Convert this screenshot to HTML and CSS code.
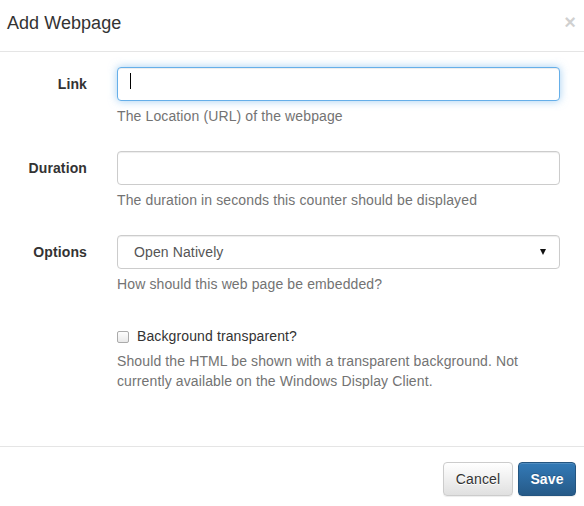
FILE: index.html
```html
<!DOCTYPE html>
<html>
<head>
<meta charset="utf-8">
<title>Add Webpage</title>
<link rel="stylesheet" href="styles.css">
</head>
<body>
<div class="modal">
  <div class="modal-header">
    <h4 class="modal-title">Add Webpage</h4>
    <button type="button" class="close">×</button>
  </div>
  <form class="modal-body">
    <div class="form-group">
      <label class="control-label" for="link">Link</label>
      <div class="field">
        <div class="input-wrap caret">
          <input id="link" class="form-control focused" type="text">
        </div>
        <span class="help-block">The Location (URL) of the webpage</span>
      </div>
    </div>
    <div class="form-group">
      <label class="control-label" for="duration">Duration</label>
      <div class="field">
        <input id="duration" class="form-control" type="text">
        <span class="help-block">The duration in seconds this counter should be displayed</span>
      </div>
    </div>
    <div class="form-group">
      <label class="control-label" for="options">Options</label>
      <div class="field">
        <div class="select-wrap">
          <select id="options" class="form-control select">
            <option>Open Natively</option>
          </select>
        </div>
        <span class="help-block">How should this web page be embedded?</span>
      </div>
    </div>
    <div class="form-group">
      <div class="field field-offset">
        <label class="checkbox"><input type="checkbox" class="check"><span>Background transparent?</span></label>
        <span class="help-block">Should the HTML be shown with a transparent background. Not currently available on the Windows Display Client.</span>
      </div>
    </div>
  </form>
  <div class="modal-footer">
    <button type="button" class="btn btn-default">Cancel</button>
    <button type="button" class="btn btn-primary">Save</button>
  </div>
</div>
</body>
</html>
```
FILE: styles.css
```css
* { box-sizing: border-box; }
html, body { margin: 0; padding: 0; background: #fff; }
body {
  font-family: "Liberation Sans", Arial, sans-serif;
  font-size: 14px;
  line-height: 20px;
  color: #333;
  letter-spacing: 0.12px;
}
.modal { width: 584px; }
.modal-header {
  display: flex;
  align-items: flex-start;
  justify-content: space-between;
  height: 52px;
  padding: 10px 8px 0 7px;
  border-bottom: 1px solid #e5e5e5;
}
.modal-title {
  margin: 0;
  font-size: 18px;
  font-weight: 500;
  line-height: 26px;
  color: #333;
  letter-spacing: 0.05px;
}
.close {
  margin: 2px 0 0 0;
  padding: 0;
  border: 0;
  background: transparent;
  font-family: "Liberation Sans", Arial, sans-serif;
  font-size: 20px;
  font-weight: bold;
  line-height: 21px;
  color: #000;
  opacity: .18;
  text-shadow: 0 1px 0 #fff;
}
.modal-body {
  display: block;
  margin: 0;
  padding: 15px 24px 30px 0;
}
.form-group {
  display: grid;
  grid-template-columns: 87px 443px;
  column-gap: 30px;
  margin-bottom: 15px;
}
.control-label {
  padding-top: 7px;
  text-align: right;
  font-weight: bold;
  color: #333;
}
.field-offset { grid-column: 2; }
.input-wrap, .select-wrap { position: relative; }
.form-control {
  display: block;
  width: 100%;
  height: 34px;
  margin: 0;
  padding: 6px 12px;
  font-family: "Liberation Sans", Arial, sans-serif;
  font-size: 14px;
  line-height: 20px;
  letter-spacing: 0.12px;
  color: #555;
  background: #fff;
  border: 1px solid #ccc;
  border-radius: 4px;
  box-shadow: inset 0 1px 1px rgba(0,0,0,.075);
  outline: none;
}
.form-control.focused {
  border-color: #66afe9;
  box-shadow: inset 0 1px 1px rgba(0,0,0,.075), 0 0 8px rgba(102,175,233,.6);
}
.caret::after {
  content: "";
  position: absolute;
  left: 13px;
  top: 6px;
  width: 1px;
  height: 16px;
  background: #000;
}
.select {
  appearance: none;
  -webkit-appearance: none;
  padding-left: 16px;
}
.select-wrap::after {
  content: "";
  position: absolute;
  right: 14px;
  top: 14px;
  border-left: 3.5px solid transparent;
  border-right: 3.5px solid transparent;
  border-top: 6px solid #111;
}
.help-block {
  display: block;
  margin: 5px 0 10px;
  color: #737373;
}
.checkbox {
  display: flex;
  align-items: center;
  padding-top: 7px;
  min-height: 27px;
  color: #333;
}
.check {
  appearance: none;
  -webkit-appearance: none;
  width: 12px;
  height: 12px;
  margin: 1px 8px 0 0;
  border: 1px solid #ababab;
  border-radius: 2px;
  background: linear-gradient(to bottom, #fdfdfd, #e9e9e9);
}
.modal-footer {
  display: flex;
  justify-content: flex-end;
  gap: 5px;
  padding: 15px 8px 15px 8px;
  border-top: 1px solid #e5e5e5;
}
.btn {
  height: 34px;
  padding: 6px 0;
  font-family: "Liberation Sans", Arial, sans-serif;
  font-size: 14px;
  line-height: 20px;
  letter-spacing: 0.12px;
  border: 1px solid transparent;
  border-radius: 4px;
  text-align: center;
}
.btn-default {
  width: 70px;
  color: #333;
  background: linear-gradient(to bottom, #fff 0, #e0e0e0 100%);
  border-color: #ccc;
  text-shadow: 0 1px 0 #fff;
  box-shadow: inset 0 1px 0 rgba(255,255,255,.15), 0 1px 1px rgba(0,0,0,.075);
}
.btn-primary {
  width: 58px;
  color: #fff;
  font-weight: bold;
  background: linear-gradient(to bottom, #337ab7 0, #265a88 100%);
  border-color: #245580;
  text-shadow: 0 -1px 0 rgba(0,0,0,.2);
  box-shadow: inset 0 1px 0 rgba(255,255,255,.15), 0 1px 1px rgba(0,0,0,.075);
}
```
